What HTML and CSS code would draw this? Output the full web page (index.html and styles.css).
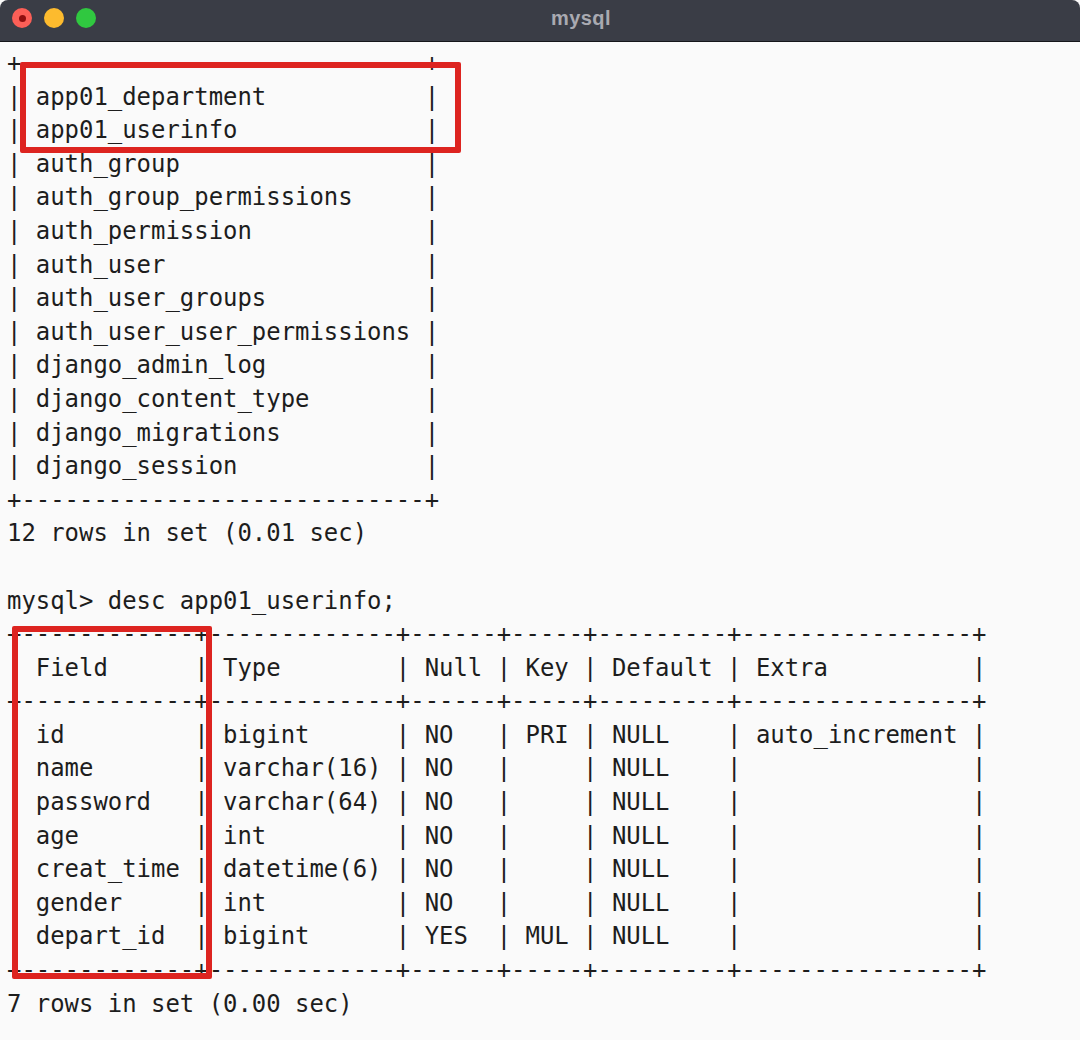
FILE: index.html
```html
<!DOCTYPE html>
<html lang="en">
<head>
    <meta charset="UTF-8">
    <meta name="viewport" content="width=device-width, initial-scale=1.0">
    <title>mysql</title>
    <link rel="stylesheet" href="styles.css">
</head>
<body>
    <header class="title-bar">
        <div class="lights">
            <span class="light light-close"></span>
            <span class="light light-min"></span>
            <span class="light light-max"></span>
        </div>
        <h1>mysql</h1>
    </header>
    <main class="terminal">
<pre>+----------------------------+
| app01_department           |
| app01_userinfo             |
| auth_group                 |
| auth_group_permissions     |
| auth_permission            |
| auth_user                  |
| auth_user_groups           |
| auth_user_user_permissions |
| django_admin_log           |
| django_content_type        |
| django_migrations          |
| django_session             |
+----------------------------+
12 rows in set (0.01 sec)

mysql&gt; desc app01_userinfo;
+------------+-------------+------+-----+---------+----------------+
| Field      | Type        | Null | Key | Default | Extra          |
+------------+-------------+------+-----+---------+----------------+
| id         | bigint      | NO   | PRI | NULL    | auto_increment |
| name       | varchar(16) | NO   |     | NULL    |                |
| password   | varchar(64) | NO   |     | NULL    |                |
| age        | int         | NO   |     | NULL    |                |
| creat_time | datetime(6) | NO   |     | NULL    |                |
| gender     | int         | NO   |     | NULL    |                |
| depart_id  | bigint      | YES  | MUL | NULL    |                |
+------------+-------------+------+-----+---------+----------------+
7 rows in set (0.00 sec)</pre>
        <div class="mark mark-tables"></div>
        <div class="mark mark-fields"></div>
    </main>
</body>
</html>
```

FILE: styles.css
```css
body {
    margin: 0;
    background-color: #fafafa;
    color: #1d1d1d;
    font-family: "DejaVu Sans Mono", "Liberation Mono", monospace;
    height: 1040px;
    overflow: hidden;
}
.title-bar {
    display: flex;
    align-items: center;
    justify-content: center;
    position: relative;
    height: 36px;
    padding: 0 0 5px 82px;
    background-color: #3a3d46;
    border-bottom: 1px solid #15161a;
    border-radius: 8px 8px 0 0;
}
.title-bar h1 {
    margin: 0;
    font-family: "Liberation Sans", Arial, sans-serif;
    font-size: 20px;
    font-weight: 700;
    letter-spacing: 0.4px;
    color: #a9aab1;
}
.lights {
    display: flex;
    gap: 12px;
    position: absolute;
    left: 12px;
    top: 8px;
}
.light {
    display: flex;
    align-items: center;
    justify-content: center;
    width: 20px;
    height: 20px;
    border-radius: 50%;
}
.light-close {
    background-color: #fc5f57;
}
.light-close::after {
    content: "";
    width: 7px;
    height: 7px;
    border-radius: 50%;
    background-color: #8f0f0f;
}
.light-min {
    background-color: #fdbb2e;
}
.light-max {
    background-color: #30c840;
}
.terminal {
    position: relative;
    padding: 5px 0 0 7px;
}
.terminal pre {
    margin: 0;
    font-family: inherit;
    font-size: 23.93px;
    line-height: 33.6px;
}
.mark {
    position: absolute;
    box-sizing: border-box;
    border: 6px solid #dd2420;
    border-radius: 2px;
}
.mark-tables {
    left: 20px;
    top: 20px;
    width: 441px;
    height: 91px;
}
.mark-fields {
    left: 12px;
    top: 584px;
    width: 200px;
    height: 353px;
}
```
